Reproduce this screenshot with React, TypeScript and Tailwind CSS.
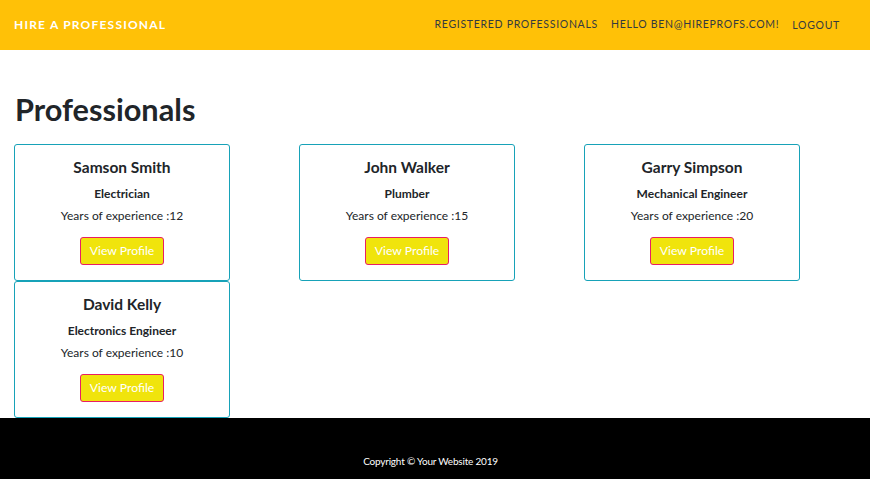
const pros = [
  { name: 'Samson Smith', role: 'Electrician', years: 12 },
  { name: 'John Walker', role: 'Plumber', years: 15 },
  { name: 'Garry Simpson', role: 'Mechanical Engineer', years: 20 },
  { name: 'David Kelly', role: 'Electronics Engineer', years: 10 },
];

const ProCard = ({ name, role, years }: { name: string; role: string; years: number }) => (
  <div className="w-[216px] h-[137px] border border-[#17a2b8] rounded-[3px] flex flex-col items-center pt-[10px] text-[#212529]">
    <h3 className="text-[15.5px] leading-[24px] font-bold">{name}</h3>
    <p className="mt-[6px] text-[12px] leading-[18px] font-bold">{role}</p>
    <p className="mt-[4px] text-[12px] leading-[18px]">Years of experience :{years}</p>
    <button className="mt-[12px] h-[28px] w-[84px] bg-[#f0e40c] border border-[#e91e63] rounded-[3px] text-white text-[12.2px]">
      View Profile
    </button>
  </div>
);

export default function App() {
  return (
    <div className="min-h-[479px] flex flex-col bg-white font-['Lato','Liberation_Sans',sans-serif]">
      {/* Navbar */}
      <nav className="h-[50px] bg-[#ffc107] flex items-center justify-between pl-[14px] pr-[30px]">
        <span className="text-white font-bold text-[12px] tracking-[1.2px] uppercase">Hire a Professional</span>
        <div className="flex items-center text-[#343a40] text-[10.5px] tracking-[0.7px] uppercase">
          <a className="mr-[13px]">Registered Professionals</a>
          <a className="mr-[13px]">Hello ben@hireprofs.com!</a>
          <a className="mt-[2px]">Logout</a>
        </div>
      </nav>

      {/* Main */}
      <main className="flex-1 pl-[14px]">
        <h1 className="mt-[42px] ml-[1px] text-[30.7px] leading-[36px] font-bold text-[#212529]">Professionals</h1>
        <div className="mt-[16px] grid grid-cols-[285px_285px_285px]">
          {pros.map(p => (
            <ProCard key={p.name} {...p} />
          ))}
        </div>
      </main>

      {/* Footer */}
      <footer className="bg-black pt-[35px] pb-[10px] pr-[9px] text-center">
        <p className="text-white text-[10px] tracking-[-0.2px] leading-[16px]">Copyright © Your Website 2019</p>
      </footer>
    </div>
  );
}
